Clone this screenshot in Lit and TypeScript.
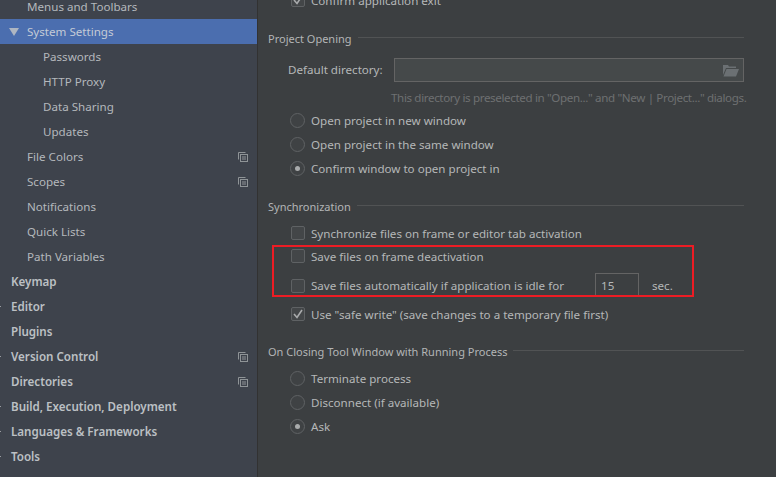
import { LitElement, html, css, svg } from "lit";
import { customElement } from "lit/decorators.js";

const copyIcon = svg`<svg class="copy" width="10" height="10" viewBox="0 0 10 10" fill="none" stroke="#8f9497" stroke-width="1"><path d="M7.500 .5H.5V7.500"/><rect x="2.500" y="2.500" width="7" height="7"/><path d="M4 5H8M4 7H8"/></svg>`;

@customElement("app-root")
export class AppRoot extends LitElement {
  static styles = css`
    :host { display: block; width: 776px; height: 477px; overflow: hidden; background: #3c3f41; font-family: "Noto Sans", "Noto Sans CJK KR", sans-serif; font-size: 11.6px; color: #bbbbbb; }
    .page { display: flex; height: 477px; position: relative; overflow: hidden; }
    .side { width: 257px; flex: none; background: #3e434c; border-right: 1px solid #323232; margin-top: -6px; }
    .row { height: 25px; display: flex; align-items: center; position: relative; padding-right: 9px; white-space: nowrap; color: #b4b8bc; }
    .l1 { padding-left: 27px; }
    .l2 { padding-left: 43px; }
    .top { padding-left: 11px; font-weight: 600; color: #bcc0c4; }
    .sel { background: #4b6eaf; color: #c4cbd6; }
    .name { flex: 1; }
    .copy { flex: none; }
    .tri { position: absolute; left: 9px; top: 9px; width: 0; height: 0; border-left: 5px solid transparent; border-right: 5px solid transparent; border-top: 8px solid #aeb6c2; }
    .dot { position: absolute; left: 0; top: 12px; width: 1px; height: 1px; background: #9a9da1; }
    .main { flex: 1; padding: 0 32px 0 10px; margin-top: -12px; min-width: 0; }
    .title { display: flex; align-items: center; gap: 6px; height: 16px; white-space: nowrap; color: #b3b5b6; font-size: 11px; }
    .title::after { content: ""; flex: 1; height: 1px; margin-top: -1px; background: #515354; }
    .opt { display: flex; align-items: center; height: 24px; padding-left: 23px; white-space: nowrap; color: #b5b7b8; }
    .box { flex: none; width: 12px; height: 12px; border: 1px solid #5f6264; border-radius: 2px; background: #434648; margin-right: 6px; display: flex; align-items: center; justify-content: center; }
    .radios .opt { padding-left: 22px; }
    .radio { flex: none; width: 13px; height: 13px; border: 1px solid #5f6264; border-radius: 50%; background: #3f4244; margin-right: 6px; display: flex; align-items: center; justify-content: center; }
    .radio.on::after { content: ""; width: 5px; height: 5px; border-radius: 50%; background: #a9abac; }
    .dir { display: flex; align-items: center; margin: 12px 0 0 20px; height: 24px; }
    .dir label { width: 106px; flex: none; color: #b5b7b8; margin-top: -2px; }
    .field { flex: 1; height: 22px; border: 1px solid #646464; background: #45494a; display: flex; align-items: center; justify-content: flex-end; padding-right: 4px; }
    .hint { margin: 8px 0 0 123px; height: 16px; line-height: 16px; white-space: nowrap; color: #6e7071; letter-spacing: -0.36px; }
    .auto { height: 29px; margin-top: 3px; }
    .auto .lbl { width: 284px; flex: none; }
    .num { height: 24px; flex: none; border: 1px solid #646464; border-bottom: none; padding-left: 5px; margin-top: -1px; box-sizing: border-box; width: 44px; display: flex; align-items: center; }
    .sec { margin-left: 13px; }
    .red { position: absolute; left: 272px; top: 245px; width: 418px; height: 48px; border: 2px solid #ed1c24; }
    .group1 { margin-top: 2px; }
    .title.t1 { margin-top: 18px; }
    .title.t2 { margin-top: 18px; }
    .title.t3 { margin-top: 17px; }
    .sync { margin-top: 7px; }
    .tight { margin-top: -1px; }
    .safe { margin-top: 2px; }
    .group3 { margin-top: 7px; }
  `;

  private opt(kind: "box" | "radio", label: string, on = false, cls = "") {
    const mark = kind === "box"
      ? html`<span class="box">${on ? svg`<svg width="10" height="10" viewBox="0 0 10 10" fill="none" stroke="#a9abac" stroke-width="1.6"><path d="M1 5L4 8.500L9 1"/></svg>` : ""}</span>`
      : html`<span class="radio ${on ? "on" : ""}"></span>`;
    return html`<div class="opt ${cls}">${mark}${label}</div>`;
  }

  render() {
    return html`<div class="page">
      <div class="side">
        <div class="row l1">Menus and Toolbars</div>
        <div class="row l1 sel"><i class="tri"></i>System Settings</div>
        <div class="row l2">Passwords</div>
        <div class="row l2">HTTP Proxy</div>
        <div class="row l2">Data Sharing</div>
        <div class="row l2">Updates</div>
        <div class="row l1"><span class="name">File Colors</span>${copyIcon}</div>
        <div class="row l1"><span class="name">Scopes</span>${copyIcon}</div>
        <div class="row l1">Notifications</div>
        <div class="row l1">Quick Lists</div>
        <div class="row l1">Path Variables</div>
        <div class="row top">Keymap</div>
        <div class="row top"><i class="dot"></i>Editor</div>
        <div class="row top">Plugins</div>
        <div class="row top"><i class="dot"></i><span class="name">Version Control</span>${copyIcon}</div>
        <div class="row top"><span class="name">Directories</span>${copyIcon}</div>
        <div class="row top"><i class="dot"></i>Build, Execution, Deployment</div>
        <div class="row top"><i class="dot"></i>Languages &amp; Frameworks</div>
        <div class="row top"><i class="dot"></i>Tools</div>
      </div>
      <div class="main">
        ${this.opt("box", "Confirm application exit", true)}
        <div class="title t1">Project Opening</div>
        <div class="dir"><label>Default directory:</label><div class="field">
          <svg width="16" height="13" viewBox="0 0 16 13"><path d="M0 1H5L6 2.500H13V4H3L0 11Z" fill="#6b7073"/><path d="M3.500 5H16L13 12.500H0.500Z" fill="#6b7073"/></svg>
        </div></div>
        <div class="hint">This directory is preselected in "Open..." and "New | Project..." dialogs.</div>
        <div class="radios group1">
          ${this.opt("radio", "Open project in new window")}
          ${this.opt("radio", "Open project in the same window")}
          ${this.opt("radio", "Confirm window to open project in", true)}
        </div>
        <div class="title t2">Synchronization</div>
        <div class="sync">
          ${this.opt("box", "Synchronize files on frame or editor tab activation")}
          ${this.opt("box", "Save files on frame deactivation", false, "tight")}
          <div class="opt auto"><span class="box"></span><span class="lbl">Save files automatically if application is idle for</span><span class="num">15</span><span class="sec">sec.</span></div>
          ${this.opt("box", 'Use "safe write" (save changes to a temporary file first)', true, "safe")}
        </div>
        <div class="title t3">On Closing Tool Window with Running Process</div>
        <div class="radios group3">
          ${this.opt("radio", "Terminate process")}
          ${this.opt("radio", "Disconnect (if available)")}
          ${this.opt("radio", "Ask", true)}
        </div>
      </div>
      <div class="red"></div>
    </div>`;
  }
}
